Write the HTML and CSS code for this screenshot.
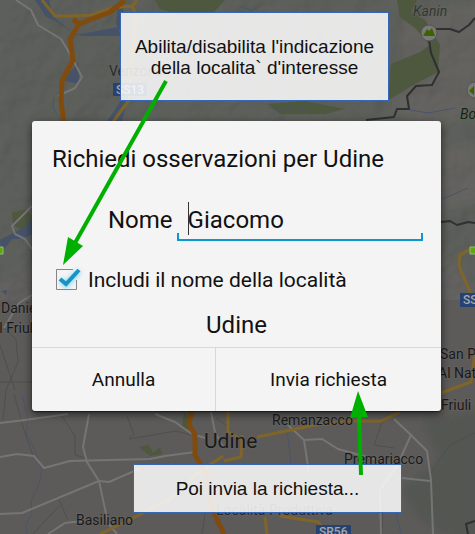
FILE: index.html
```html
<!DOCTYPE html>
<html lang="it">
<head>
<meta charset="utf-8">
<meta name="viewport" content="width=device-width, initial-scale=1">
<title>Richiedi osservazioni per Udine</title>
<link rel="stylesheet" href="styles.css">
</head>
<body>
<main class="screen">
  <svg class="map" viewBox="0 0 475 534" preserveAspectRatio="xMinYMin slice" aria-hidden="true">
    <defs>
      <filter id="relief" x="0" y="0" width="100%" height="100%">
        <feTurbulence type="fractalNoise" baseFrequency="0.035" numOctaves="3" seed="8"/>
        <feDiffuseLighting lighting-color="#999" surfaceScale="6"><feDistantLight azimuth="225" elevation="55"/></feDiffuseLighting>
      </filter>
      <filter id="soft"><feGaussianBlur stdDeviation="5"/></filter>
    </defs>
    <rect width="475" height="534" fill="#5d5b59"/>
    <g filter="url(#soft)">
      <path fill="#555953" d="M-10-10H485V300L440 250V130H32V270L-10 290Z"/>
      <path fill="#5d5b59" d="M400 20L480 0V110L430 130L395 110ZM440 150L480 140V200L440 210Z"/>
      <path fill="#525751" d="M420 420L480 410V540H455L420 520L400 490L440 460Z"/>
    </g>
    <path filter="url(#relief)" opacity=".13" d="M0 0H475V300H440V122H32V300H0Z"/>
    <g class="park">
      <path d="M155 0H225L213 13L180 15L160 9Z"/>
      <path d="M397 0H417L411 12L425 20L440 45L438 72L415 84L388 100L391 64L420 52L430 45L415 28L400 17Z"/>
      <path d="M268 104L305 101L345 109L325 114H280Z"/>
      <path d="M12 213L25 209L32 216L25 231L13 225Z"/>
      <path d="M139 447L149 445L153 453L160 447L162 454L150 456ZM184 412L190 418L188 431L182 425Z"/>
    </g>
    <g class="water">
      <path d="M35 0H49L53 16L68 29L76 35L118 27L121 36L82 36L70 31L59 23L46 17Z"/>
      <path d="M118 8L124 5L121 32L116 24Z"/>
      <path d="M68 74L78 63L79 84L65 81ZM123 94L133 78L122 121H107L119 104Z"/>
      <path d="M0 240L13 233L25 227L32 218V234L23 239L12 239L1 253ZM1 291L7 290L6 295Z"/>
    </g>
    <g class="stream">
      <path d="M22 394L28 420L26 433L36 453L42 470L39 485L31 500L32 514L26 524L27 534"/>
      <path d="M285 425L288 438L292 472M395 508L401 534M54 97L53 108L61 121M240 7L252 10L260 6M268 107L282 111L288 108M281 107L310 112M405 109L428 113L455 108M443 199L468 188"/>
    </g>
    <g class="minor">
      <path d="M14 394L24 430L33 456M62 416L75 436V455L85 458M127 416L134 434L129 439L176 431L195 436M383 420L374 445L394 448M33 534L59 506M0 345L15 390M3 420L6 390L18 362L16 339L4 328"/>
      <path d="M59 500L68 520M0 382L32 382M206 507L202 534M216 418L230 428M429 475L450 445L475 433M382 534L383 497L376 475"/>
    </g>
    <g class="road">
      <path d="M16 0L31 10L38 25L61 39L67 49M67 49L72 58L82 77L75 88L58 96"/>
      <path d="M32 206L12 226L15 234L25 239L32 249M32 295L19 303L4 328"/>
      <path d="M0 423L25 420L68 414"/>
      <path d="M0 457L17 454L34 456L44 468L70 461L150 459L165 456L195 452"/>
      <path d="M0 514L22 513L99 481L109 482L139 469"/>
      <path d="M89 414L83 447L87 462L99 481L108 523L117 534M48 534L65 523L82 521"/>
      <path d="M155 414L175 422L192 434L205 438M288 425L304 440L309 473M304 440L322 439L338 449L375 459"/>
      <path d="M394 419L411 435L397 466L380 490L381 534M411 435L427 451L431 480L433 534M402 478L430 481"/>
      <path d="M211 412L215 432L223 447"/>
    </g>
    <g class="yellow">
      <path d="M42 0L55 16H73L91 15L112 8L132 6L137 0M132 6L136 14L132 65L129 100L118 115L111 125"/>
      <path d="M470 249L460 255L459 266L475 304M475 352L471 382L441 393"/>
      <path d="M257 437L315 425L350 421H381L400 412M228 411L228 432L242 440M100 534L133 518L170 499L195 475L223 456M242 435L241 457L224 461M265 517L267 534M280 516L318 522L328 534"/>
    </g>
    <g class="orange">
      <path d="M125 0L110 12L79 24L70 39L73 60L62 81L61 101L64 124M79 24L73 19"/>
      <path d="M192 410L189 424L195 435V455L207 475L212 509L224 534"/>
    </g>
    <g class="border">
      <path d="M366 120L394 117L397 109H409L407 96L416 86L432 85L439 72L431 53L429 40M436 29H450L459 32L469 25L475 18M441 222L450 221L457 225L468 222L475 223M475 521L466 524L468 534"/>
    </g>
    <g class="peak">
      <circle cx="429" cy="33" r="8"/><path d="M423 36L427 29L429 31L432 28L435 36Z"/>
      <circle cx="475" cy="90" r="8"/><path d="M469 91L474 86V95Z"/>
    </g>
    <g class="shield">
      <rect x="113" y="83" width="34" height="13"/><text x="116" y="94">SS13</text>
      <rect x="460" y="293" width="34" height="14"/><text x="463" y="304">SS56</text>
      <rect x="316" y="525" width="35" height="14"/><text x="319" y="536">SR56</text>
    </g>
    <g class="place">
      <text x="109" y="76" class="faded">Venzone</text>
      <text x="413" y="16" class="mountain">Kanin</text>
      <text x="460" y="119" class="forest">Bovec</text>
      <text x="1" y="313">Daniele</text>
      <text x="-16" y="333">del Friuli</text>
      <text x="440" y="359">San Pietro</text>
      <text x="438" y="378">Al Natisone</text>
      <text x="441" y="410">Friuli</text>
      <text x="272" y="425">Remanzacco</text>
      <text x="344" y="464">Premariacco</text>
      <text x="76" y="525">Basiliano</text>
      <text x="216" y="515" class="faded">Località Produttiva</text>
      <text x="204" y="448" class="city">Udine</text>
    </g>
    <path class="handle" d="M-4 247H3V254H-4ZM470 247H479V254H470Z"/>
  </svg>

  <form class="dialog">
    <div class="content">
      <h1 class="title">Richiedi osservazioni per Udine</h1>
      <div class="field">
        <label for="name">Nome</label>
        <span class="box"><input id="name" type="text" value="Giacomo"></span>
      </div>
      <label class="option">
        <input type="checkbox" checked>
        <svg class="check" viewBox="0 0 28 28" aria-hidden="true">
          <path class="frame" d="M22.500 16V25.500H2.500V5.500H19"/>
          <path class="glow" d="M7 16L12 21L25 7"/>
          <path class="tick" d="M6 15L12 20L25 6"/>
        </svg>
        <span>Includi il nome della località</span>
      </label>
      <p class="locality">Udine</p>
    </div>
    <div class="actions">
      <button type="button">Annulla</button>
      <button type="submit">Invia richiesta</button>
    </div>
  </form>

  <aside class="note note-top">Abilita/disabilita l'indicazione<br>della localita` d'interesse</aside>
  <aside class="note note-bottom">Poi invia la richiesta...</aside>

  <svg class="arrows" viewBox="0 0 475 534" preserveAspectRatio="xMinYMin slice" aria-hidden="true">
    <path class="shaft" d="M166 81L75 243M361 475L359 415"/>
    <path class="head" d="M63 265L68 237L83 246ZM358 391L350 418L368 417Z"/>
  </svg>
</main>
</body>
</html>
```
FILE: styles.css
```css
* { box-sizing: border-box; }

body {
  margin: 0;
  font-family: Roboto, "Liberation Sans", sans-serif;
  color: #111;
  background: #5d5b59;
}

.screen {
  position: relative;
  min-height: 100vh;
  padding: 121px 34px 24px 32px;
  overflow: hidden;
}

.map, .arrows {
  position: absolute;
  top: 0;
  left: 0;
  width: 100%;
  height: 100%;
  pointer-events: none;
}

.map path { stroke-linejoin: round; }
.park path { fill: #4d583f; }
.water path { fill: #465268; }
.stream path { fill: none; stroke: #49556b; }
.minor path { fill: none; stroke: #504f4d; }
.road path { fill: none; stroke: #777573; stroke-width: 2; }
.yellow path { fill: none; stroke: #806528; stroke-width: 3; }
.orange path { fill: none; stroke: #804b0c; stroke-width: 5; }
.border path { fill: none; stroke: #302f31; stroke-width: 2; }
.peak circle { fill: #797a75; stroke: #555; }
.peak path { fill: #3d6200; }
.shield rect { fill: #264273; }
.shield text { fill: #a4a6aa; font-size: 12px; font-weight: 500; }
.place text {
  fill: #191919;
  font-size: 14px;
  paint-order: stroke;
  stroke: #686664;
  stroke-width: 1px;
}
.place .city { font-size: 21px; }
.place .mountain { fill: #30382e; font-style: italic; }
.place .forest { fill: #10240e; font-style: italic; }
.place .faded { fill: #292929; }
.handle { fill: #58a80e; stroke: #9bb781; }

.dialog {
  position: relative;
  background: #f4f4f4;
  border-radius: 3px;
  box-shadow: 0 3px 8px rgba(0, 0, 0, .6), 0 1px 1px rgba(0, 0, 0, .5);
}

.content { padding: 20px 20px 4px; }

.title {
  margin: 0;
  font-size: 24px;
  font-weight: 400;
  line-height: 36px;
}

.field {
  display: flex;
  align-items: center;
  margin: 25px -2px 0 0;
  padding-left: 56px;
  gap: 4px;
  font-size: 24px;
  line-height: 36px;
}

.box {
  position: relative;
  flex: 1;
  min-width: 0;
}

.box::before {
  content: "";
  position: absolute;
  left: 11px;
  top: 0;
  width: 1px;
  height: 33px;
  background: #333;
}

.box::after {
  content: "";
  position: absolute;
  inset: auto 0 -3px 0;
  height: 6px;
  border: 2px solid #0a98cf;
  border-top: 0;
  pointer-events: none;
}

.box input {
  display: block;
  width: 100%;
  height: 36px;
  padding: 0 11px;
  border: 0;
  outline: 0;
  background: none;
  font: inherit;
  color: inherit;
}

.option {
  display: flex;
  align-items: center;
  position: relative;
  margin-top: 26px;
  padding-left: 2px;
  gap: 6px;
  font-size: 21px;
  line-height: 32px;
}

.option input {
  position: absolute;
  left: 4px;
  width: 24px;
  height: 24px;
  margin: 0;
  opacity: 0;
}

.check { width: 28px; height: 28px; margin-top: -4px; overflow: visible; }
.check path { fill: none; }
.check .frame { stroke: #858585; }
.check .glow { stroke: #5cc9ef; stroke-width: 6; filter: blur(2px); opacity: .6; }
.check .tick { stroke: #1594c5; stroke-width: 4; }

.locality {
  margin: 11px 0 0;
  font-size: 24px;
  line-height: 36px;
  text-align: center;
}

.actions {
  display: grid;
  grid-template-columns: 183fr 226fr;
  border-top: 1px solid #d8d8d8;
}

.actions button {
  height: 63px;
  padding: 0;
  border: 0;
  background: none;
  font: 19px/24px Roboto, sans-serif;
  color: #111;
}

.actions button + button { border-left: 1px solid #d8d8d8; }

.note {
  position: absolute;
  display: flex;
  align-items: center;
  justify-content: center;
  border: 1px solid #3468b6;
  background: rgba(255, 255, 255, .85);
  font: 19px/21px "Liberation Sans", Arial, sans-serif;
  text-align: center;
}

.note-top { top: 12px; left: 120px; width: 269px; height: 89px; }
.note-bottom { top: 464px; left: 133px; width: 269px; height: 49px; }

.shaft { fill: none; stroke: #00b000; stroke-width: 4; stroke-linecap: butt; }
.head { fill: #00b000; }
```
